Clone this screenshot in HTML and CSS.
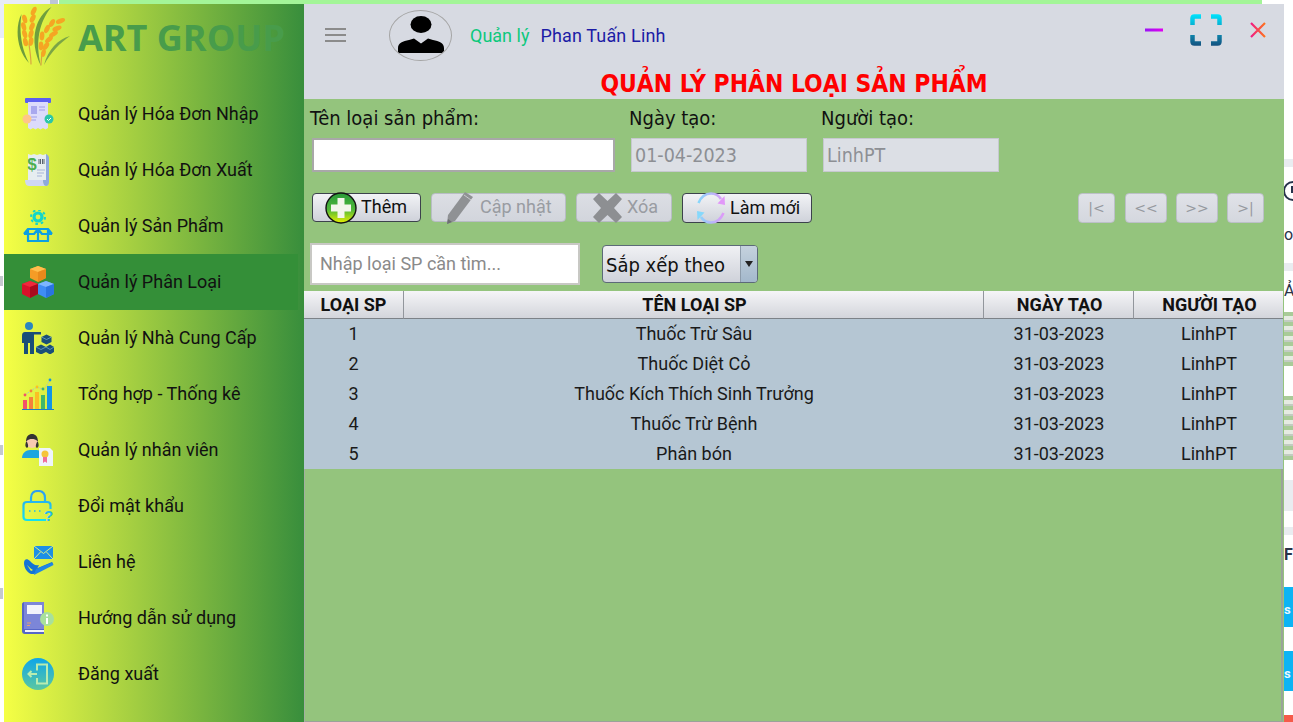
FILE: index.html
```html
<!DOCTYPE html>
<html lang="vi">
<head>
    <meta charset="UTF-8">
    <meta name="viewport" content="width=device-width, initial-scale=1.0">
    <title>Quản lý phân loại sản phẩm</title>
    <link rel="stylesheet" href="styles.css">
</head>
<body>
    <!-- desktop behind the window -->
    <div class="backdrop">
        <div class="bg-tab"></div>
        <div class="bg-tab-edge"></div>
        <div class="bg-topbar"></div>
        <div class="bg-bar bg-bar-1"></div>
        <div class="bg-clock"></div>
        <div class="bg-text bg-text-1">o</div>
        <div class="bg-bar bg-bar-2"></div>
        <div class="bg-text bg-text-2">Ản</div>
        <div class="bg-thumb bg-thumb-1"></div>
        <div class="bg-thumb bg-thumb-2"></div>
        <div class="bg-bar bg-bar-3"></div>
        <div class="bg-bar bg-bar-4"></div>
        <div class="bg-text bg-text-3">Fil</div>
        <div class="bg-blue bg-blue-1">s</div>
        <div class="bg-blue bg-blue-2">s</div>
        <div class="bg-red"></div>
        <div class="bg-left bg-left-1"></div>
        <div class="bg-left bg-left-2"></div>
        <div class="bg-left bg-left-3"></div>
    </div>

    <div class="window">
        <aside class="sidebar">
            <div class="brand">
                <svg class="brand-logo" width="58" height="62" viewBox="0 0 58 62">
                    <g fill="none" stroke-linecap="round">
                        <path d="M5.500 8C-1 20 0 44 13 57C5 42 3 24 5.500 8Z" fill="#6d9c3c"/>
                        <path d="M35.500 1C20 9 12 34 25 60C19 36 23 16 35.500 1Z" fill="#6f9f3e"/>
                        <path d="M54 30C42 33 32 44 28 59C35 46 44 37 54 30Z" fill="#7ba546"/>
                        <path d="M13 38C14 46 15 52 15 58" stroke="#d9a441" stroke-width="1.200"/>
                        <path d="M26 46C26 50 25 55 25 59" stroke="#d9a441" stroke-width="1.200"/>
                    </g>
                    <g fill="#f5a623">
                        <ellipse cx="17.700" cy="5" rx="2.400" ry="4.600" transform="rotate(25 17.700 5)"/>
                        <ellipse cx="8.700" cy="13" rx="2.400" ry="4.400" transform="rotate(-15 8.700 13)"/>
                        <ellipse cx="16.700" cy="12.500" rx="2.400" ry="4.400" transform="rotate(28 16.700 12.500)"/>
                        <ellipse cx="7.700" cy="20.500" rx="2.400" ry="4.400" transform="rotate(-15 7.700 20.500)"/>
                        <ellipse cx="16" cy="20.500" rx="2.400" ry="4.400" transform="rotate(22 16 20.500)"/>
                        <ellipse cx="8.700" cy="28" rx="2.400" ry="4.400" transform="rotate(-15 8.700 28)"/>
                        <ellipse cx="15" cy="28" rx="2.400" ry="4.400" transform="rotate(15 15 28)"/>
                        <ellipse cx="9.500" cy="36" rx="2.400" ry="4.400" transform="rotate(-12 9.500 36)"/>
                        <ellipse cx="15" cy="35.500" rx="2.400" ry="4.400" transform="rotate(8 15 35.500)"/>
                        <ellipse cx="44.500" cy="15" rx="2.400" ry="4.800" transform="rotate(70 44.500 15)"/>
                        <ellipse cx="36" cy="17" rx="2.400" ry="4.400" transform="rotate(30 36 17)"/>
                        <ellipse cx="41" cy="22.500" rx="2.400" ry="4.800" transform="rotate(70 41 22.500)"/>
                        <ellipse cx="31" cy="23" rx="2.400" ry="4.400" transform="rotate(25 31 23)"/>
                        <ellipse cx="37.500" cy="28" rx="2.400" ry="4.800" transform="rotate(60 37.500 28)"/>
                        <ellipse cx="26" cy="30" rx="2.400" ry="4.400" transform="rotate(5 26 30)"/>
                        <ellipse cx="33" cy="33.500" rx="2.400" ry="4.600" transform="rotate(50 33 33.500)"/>
                        <ellipse cx="25" cy="40" rx="2.400" ry="4.400" transform="rotate(0 25 40)"/>
                        <ellipse cx="30" cy="40" rx="2.400" ry="4.400" transform="rotate(35 30 40)"/>
                        <ellipse cx="27.500" cy="47" rx="2.200" ry="4" transform="rotate(15 27.500 47)"/>
                    </g>
                </svg>
                <span class="brand-name">ART GROUP</span>
            </div>

            <nav class="menu">
                <a class="menu-item">
                    <svg class="menu-icon" width="32" height="32" viewBox="0 0 32 32">
                        <rect x="3" y="0" width="26" height="5" rx="1" fill="#5b5ff0"/>
                        <path d="M6 4H26V30L23.500 31.500 21 30 18.500 31.500 16 30 13.500 31.500 11 30 8.500 31.500 6 30Z" fill="#dcdbfb"/>
                        <rect x="9" y="8" width="6" height="8" fill="#a9a8ee"/>
                        <path d="M17 9H23M17 12H23M9 19H15M9 22H14" stroke="#b4b3f0" stroke-width="1.300"/>
                        <circle cx="5" cy="21" r="4.500" fill="#ffc688"/>
                        <circle cx="27" cy="21" r="4.500" fill="#2cc6a8"/>
                        <path d="M25 21L26.500 22.500 29 20" fill="none" stroke="#fff" stroke-width="1"/>
                    </svg>
                    <span>Quản lý Hóa Đơn Nhập</span>
                </a>
                <a class="menu-item">
                    <svg class="menu-icon" width="32" height="32" viewBox="0 0 32 32">
                        <path d="M6 0L9 1 12 0 15 1 18 0 21 1 24 0V26H6Z" fill="#e6edf0"/>
                        <path d="M3 26H21C21 29 23 32 27 32H7C4 32 3 29 3 26Z" fill="#cfd7f3"/>
                        <path d="M24 0C26 1 27 2 27 4V28C27 30 26 32 24 32C22 32 21 29 21 26H24Z" fill="#8ea9dc"/>
                        <text x="10" y="16" class="icon-dollar">$</text>
                        <path d="M17 5V10M18.500 5V10M20.500 5V10M22 5V10" stroke="#5a6470" stroke-width="1"/>
                        <path d="M15 16H23M15 19H22M15 22H20" stroke="#a8b5d8" stroke-width="1"/>
                    </svg>
                    <span>Quản lý Hóa Đơn Xuất</span>
                </a>
                <a class="menu-item">
                    <svg class="menu-icon" width="32" height="32" viewBox="0 0 32 32">
                        <circle cx="16" cy="7" r="4" fill="none" stroke="#12d6c8" stroke-width="3.200"/>
                        <circle cx="16" cy="7" r="7" fill="none" stroke="#12d6c8" stroke-width="2" stroke-dasharray="2.600 2.900"/>
                        <path d="M6 19H26V31H6ZM16 19V31M2 24L6 19M30 24L26 19M2 24H12L16 19L20 24H30" fill="none" stroke="#0d9fe3" stroke-width="2.200" stroke-linejoin="round"/>
                    </svg>
                    <span>Quản lý Sản Phẩm</span>
                </a>
                <a class="menu-item menu-item-active">
                    <svg class="menu-icon" width="32" height="32" viewBox="0 0 32 32">
                        <path d="M16 0L24 3V12L16 16 8 12V3Z" fill="#f59c26"/>
                        <path d="M8 3L16 6 24 3 16 0Z" fill="#ffbe4d"/>
                        <path d="M16 6V16L24 12V3Z" fill="#e8891b"/>
                        <path d="M8 15L16 18V28L8 32 0 28V18Z" fill="#d8122a"/>
                        <path d="M0 18L8 21 16 18 8 15Z" fill="#f0283c"/>
                        <path d="M8 21V32L16 28V18Z" fill="#a80b1e"/>
                        <path d="M24 15L32 18V28L24 32 16 28V18Z" fill="#3f8df5"/>
                        <path d="M16 18L24 21 32 18 24 15Z" fill="#7db6ff"/>
                        <path d="M24 21V32L32 28V18Z" fill="#2a74e0"/>
                    </svg>
                    <span>Quản lý Phân Loại</span>
                </a>
                <a class="menu-item">
                    <svg class="menu-icon" width="32" height="32" viewBox="0 0 32 32">
                        <circle cx="7" cy="4" r="4" fill="#2b86c0"/>
                        <path d="M3 10H19V12.500H12V32H8V21H6V32H2V21H0V14C0 11 1 10 3 10Z" fill="#1a4f78"/>
                        <path d="M24.500 12.500L29.500 15V20L24.500 22.500 19.500 20V15Z" fill="#1a4f78"/>
                        <path d="M19 22.500L24 25V30L19 32.500 14 30V25Z" fill="#1a4f78"/>
                        <path d="M28 22.500L32 25V30L28 32.500 24 30V25Z" fill="#1a4f78"/>
                        <path d="M19.500 15L24.500 17.500 29.500 15M14 25L19 27.500 24 25M24 25L28 27.500 32 25" fill="none" stroke="#6fa6c8" stroke-width=".8"/>
                    </svg>
                    <span>Quản lý Nhà Cung Cấp</span>
                </a>
                <a class="menu-item">
                    <svg class="menu-icon" width="32" height="32" viewBox="0 0 32 32">
                        <path d="M3 17L10 12 15 9 22 12 28 2" fill="none" stroke="#a9c9b8" stroke-width="1" stroke-dasharray="2 1"/>
                        <rect x="1" y="22" width="4" height="9" fill="#f3526a"/>
                        <rect x="7" y="19" width="4" height="12" fill="#f5813c"/>
                        <rect x="13" y="14" width="4" height="17" fill="#fbbf24"/>
                        <rect x="19" y="17" width="4" height="14" fill="#3fb86b"/>
                        <rect x="25" y="8" width="5" height="23" fill="#1295e8"/>
                        <rect x="0" y="31" width="32" height="1" fill="#1d7fc4"/>
                        <circle cx="3" cy="17" r="1.400" fill="#f3526a"/>
                        <circle cx="9" cy="13" r="1.400" fill="#f5813c"/>
                        <circle cx="15" cy="9" r="1.400" fill="#fbbf24"/>
                        <circle cx="21" cy="11" r="1.400" fill="#3fb86b"/>
                        <circle cx="28" cy="2" r="1.400" fill="#1295e8"/>
                    </svg>
                    <span>Tổng hợp - Thống kê</span>
                </a>
                <a class="menu-item">
                    <svg class="menu-icon" width="32" height="32" viewBox="0 0 32 32">
                        <path d="M0 24C0 19 4 16 8 16H15C18 16 20 19 20 24H0Z" fill="#1da6e0"/>
                        <circle cx="10" cy="8" r="6" fill="#f7c9b0"/>
                        <path d="M4 8C4 2 7 0 10 0S16 2 16 8C14 5 12 5 10 5S6 5 4 8Z" fill="#333"/>
                        <path d="M4 8C3 11 3 13 5 14C7 13 6 10 5 8ZM16 8C17 11 17 13 15 14C13 13 14 10 15 8Z" fill="#333"/>
                        <path d="M17 14H28L31 17V32H17Z" fill="#eef4fb"/>
                        <circle cx="23" cy="20" r="3.500" fill="#f5c53a"/>
                        <path d="M21 23V29L23 27.500 25 29V23Z" fill="#f06f9b"/>
                    </svg>
                    <span>Quản lý nhân viên</span>
                </a>
                <a class="menu-item">
                    <svg class="menu-icon" width="32" height="32" viewBox="0 0 32 32">
                        <defs>
                            <linearGradient id="lockGrad" x1="0" y1="0" x2="0" y2="1">
                                <stop offset="0" stop-color="#2f9df0"/>
                                <stop offset="1" stop-color="#14e0f0"/>
                            </linearGradient>
                        </defs>
                        <path d="M9 12V8C9 3 12 1 16 1S23 3 23 8V12M24 30H5C2.500 30 1.500 29 1.500 27V15C1.500 13 2.500 12 5 12H25C27 12 28.500 13 28.500 15V19" fill="none" stroke="url(#lockGrad)" stroke-width="2.200"/>
                        <path d="M7 21H8.500M12 21H13.500M17 21H18.500" stroke="#22b8f0" stroke-width="1.600"/>
                        <text x="22" y="31" class="icon-question">?</text>
                    </svg>
                    <span>Đổi mật khẩu</span>
                </a>
                <a class="menu-item">
                    <svg class="menu-icon" width="32" height="32" viewBox="0 0 32 32">
                        <rect x="12" y="0" width="19" height="13" fill="#1d8fe6"/>
                        <path d="M12 0L21.500 7.500 31 0M12 13L18.500 6M31 13L24.500 6" fill="none" stroke="#d6ee8a" stroke-width="1"/>
                        <path d="M2 17C2 13 5 12 8 15C11 18 13 20 17 19L15 23 11 24C9 23 6 20 5 19L9 25 11 24 30 16 31 18 12 28 9 28C5 26 2 22 2 17Z" fill="#1474d4"/>
                        <path d="M14 23L24 19 30.500 16.500 31.500 19 12 29Z" fill="#1f86e4"/>
                    </svg>
                    <span>Liên hệ</span>
                </a>
                <a class="menu-item">
                    <svg class="menu-icon" width="32" height="32" viewBox="0 0 32 32">
                        <path d="M2 0H22V27H2Z" fill="#7c86d8"/>
                        <rect x="5" y="3" width="15" height="9" fill="#f2f3fb"/>
                        <path d="M5 21H9M5 23.500H8" stroke="#e8a070" stroke-width="1"/>
                        <path d="M0 2C0 1 1 0 2 0V27H22V32H3C1 32 0 31 0 29Z" fill="#5666c8"/>
                        <rect x="3" y="28" width="19" height="2" fill="#f2f3fb"/>
                        <circle cx="25" cy="17" r="7" fill="#a8e09c"/>
                        <rect x="24" y="16" width="2" height="6" fill="#fff"/>
                        <rect x="24" y="12.500" width="2" height="2" fill="#fff"/>
                    </svg>
                    <span>Hướng dẫn sử dụng</span>
                </a>
                <a class="menu-item">
                    <svg class="menu-icon" width="32" height="32" viewBox="0 0 32 32">
                        <defs>
                            <linearGradient id="exitGrad" x1="0" y1="0" x2="0" y2="1">
                                <stop offset="0" stop-color="#0ea5e9"/>
                                <stop offset="1" stop-color="#5cc8a0"/>
                            </linearGradient>
                        </defs>
                        <circle cx="16" cy="16" r="16" fill="url(#exitGrad)"/>
                        <path d="M15 12.500V6.500H25V25.500H15V20" fill="none" stroke="#b8ecb0" stroke-width="2"/>
                        <path d="M15 16H6.500M9.500 13L6.500 16 9.500 19" fill="none" stroke="#b8ecb0" stroke-width="2"/>
                    </svg>
                    <span>Đăng xuất</span>
                </a>
            </nav>
        </aside>

        <main class="content">
            <header class="topbar">
                <div class="topbar-row">
                    <div class="hamburger"><i></i><i></i><i></i></div>
                    <div class="avatar">
                        <svg width="48" height="38" viewBox="0 0 48 38">
                            <ellipse cx="24" cy="8.500" rx="10.500" ry="8.500"/>
                            <path d="M1 37V32C1 27 6 25 12 24L17 22.500 24 27.500 31 22.500 36 24C42 25 47 27 47 32V37Z"/>
                        </svg>
                    </div>
                    <span class="role">Quản lý</span>
                    <span class="username">Phan Tuấn Linh</span>
                    <div class="win-controls">
                        <svg width="18" height="4" viewBox="0 0 18 4">
                            <defs>
                                <linearGradient id="minGrad">
                                    <stop offset="0" stop-color="#9a14f5"/>
                                    <stop offset="1" stop-color="#e000f0"/>
                                </linearGradient>
                            </defs>
                            <rect width="18" height="3" y=".5" fill="url(#minGrad)"/>
                        </svg>
                        <svg width="32" height="32" viewBox="0 0 32 32">
                            <defs>
                                <linearGradient id="fullGrad" gradientUnits="userSpaceOnUse" x1="0" y1="0" x2="0" y2="32">
                                    <stop offset="0" stop-color="#00e5ff"/>
                                    <stop offset="1" stop-color="#14507e"/>
                                </linearGradient>
                            </defs>
                            <path d="M11 2.500H4.500Q2.500 2.500 2.500 4.500V11M21 2.500H27.500Q29.500 2.500 29.500 4.500V11M11 29.500H4.500Q2.500 29.500 2.500 27.500V21M21 29.500H27.500Q29.500 29.500 29.500 27.500V21" fill="none" stroke="url(#fullGrad)" stroke-width="4.500"/>
                        </svg>
                        <svg class="win-close" width="16" height="16" viewBox="0 0 16 16">
                            <defs>
                                <linearGradient id="closeGrad" gradientUnits="userSpaceOnUse" x1="0" y1="0" x2="16" y2="0">
                                    <stop offset="0" stop-color="#f0148c"/>
                                    <stop offset="1" stop-color="#ff7a14"/>
                                </linearGradient>
                            </defs>
                            <path d="M1 1L15 15M15 1L1 15" stroke="url(#closeGrad)" stroke-width="2.200" fill="none"/>
                        </svg>
                    </div>
                </div>
                <h1 class="page-title">QUẢN LÝ PHÂN LOẠI SẢN PHẨM</h1>
            </header>

            <section class="panel">
                <div class="fields">
                    <div class="field field-name">
                        <label>Tên loại sản phẩm:</label>
                        <input type="text" class="input">
                    </div>
                    <div class="field field-meta">
                        <label>Ngày tạo:</label>
                        <input type="text" class="input" value="01-04-2023" disabled>
                    </div>
                    <div class="field field-meta">
                        <label>Người tạo:</label>
                        <input type="text" class="input" value="LinhPT" disabled>
                    </div>
                </div>

                <div class="actions">
                    <button class="btn btn-add">
                        <svg width="32" height="32" viewBox="0 0 32 32">
                            <defs>
                                <linearGradient id="addGrad" x1="0" y1="0" x2="0" y2="1">
                                    <stop offset="0" stop-color="#2a9a3a"/>
                                    <stop offset=".55" stop-color="#4fb83a"/>
                                    <stop offset="1" stop-color="#e8f000"/>
                                </linearGradient>
                            </defs>
                            <circle cx="16" cy="16" r="15" fill="url(#addGrad)" stroke="#111" stroke-width="1.400"/>
                            <path d="M12.500 6H19.500V12.500H26V19.500H19.500V26H12.500V19.500H6V12.500H12.500Z" fill="#f4f6ec"/>
                        </svg>
                        <span>Thêm</span>
                    </button>
                    <button class="btn btn-edit" disabled>
                        <svg width="26" height="32" viewBox="0 0 26 32">
                            <path d="M18 0L26 5 8 29 0 32 1 23Z" fill="#8f9194"/>
                            <path d="M17 3L24 8" stroke="#c8cacd" stroke-width="1"/>
                            <path d="M1 27L0 32 5 30Z" fill="#6d6f72"/>
                        </svg>
                        <span>Cập nhật</span>
                    </button>
                    <button class="btn btn-del" disabled>
                        <svg width="29" height="30" viewBox="0 0 29 30">
                            <path d="M6 0L14.500 8 23 0 29 6 21 15 29 24 23 30 14.500 22 6 30 0 24 8 15 0 6Z" fill="#8d8f92"/>
                        </svg>
                        <span>Xóa</span>
                    </button>
                    <button class="btn btn-refresh">
                        <svg width="32" height="32" viewBox="0 0 32 32">
                            <defs>
                                <linearGradient id="refreshGrad" gradientUnits="userSpaceOnUse" x1="3" y1="0" x2="29" y2="0">
                                    <stop offset="0" stop-color="#86d8fb"/>
                                    <stop offset="1" stop-color="#e198f8"/>
                                </linearGradient>
                            </defs>
                            <path d="M3.500 11C6 5 11 1.500 16 1.500C20 1.500 23.500 3 26 7" fill="none" stroke="url(#refreshGrad)" stroke-width="2.600"/>
                            <path d="M29.500 4L30 13 22.500 11.500Z" fill="#e198f8"/>
                            <path d="M28.500 21C26 27 21 30.500 16 30.500C12 30.500 8.500 29 6 25" fill="none" stroke="url(#refreshGrad)" stroke-width="2.600"/>
                            <path d="M2.500 28L2 19 9.500 20.500Z" fill="#86d8fb"/>
                        </svg>
                        <span>Làm mới</span>
                    </button>
                    <div class="pager">
                        <button class="page-btn page-btn-sm" disabled>|&lt;</button>
                        <button class="page-btn" disabled>&lt;&lt;</button>
                        <button class="page-btn" disabled>&gt;&gt;</button>
                        <button class="page-btn page-btn-sm" disabled>&gt;|</button>
                    </div>
                </div>

                <div class="filters">
                    <input type="text" class="search" placeholder="Nhập loại SP cần tìm...">
                    <div class="sort">
                        <span class="sort-label">Sắp xếp theo</span>
                        <span class="sort-arrow"></span>
                    </div>
                </div>
            </section>

            <div class="table-pane">
                <table class="grid">
                    <thead>
                        <tr>
                            <th class="col-id">LOẠI SP</th>
                            <th>TÊN LOẠI SP</th>
                            <th class="col-date">NGÀY TẠO</th>
                            <th class="col-user">NGƯỜI TẠO</th>
                        </tr>
                    </thead>
                    <tbody>
                        <tr><td>1</td><td>Thuốc Trừ Sâu</td><td>31-03-2023</td><td>LinhPT</td></tr>
                        <tr><td>2</td><td>Thuốc Diệt Cỏ</td><td>31-03-2023</td><td>LinhPT</td></tr>
                        <tr><td>3</td><td>Thuốc Kích Thích Sinh Trưởng</td><td>31-03-2023</td><td>LinhPT</td></tr>
                        <tr><td>4</td><td>Thuốc Trừ Bệnh</td><td>31-03-2023</td><td>LinhPT</td></tr>
                        <tr><td>5</td><td>Phân bón</td><td>31-03-2023</td><td>LinhPT</td></tr>
                    </tbody>
                </table>
            </div>
        </main>
    </div>
</body>
</html>
```

FILE: styles.css
```css
body {
    margin: 0;
    height: 722px;
    overflow: hidden;
    background: #fff;
    font-family: Roboto, sans-serif;
    color: #111;
}

/* desktop behind the window */
.backdrop div {
    position: absolute;
}
.bg-tab {
    left: 0;
    top: 0;
    width: 50px;
    height: 38px;
    background: #e8ecf8;
}
.bg-tab-edge {
    left: 50px;
    top: 0;
    width: 8px;
    height: 4px;
    background: #bcc6d6;
}
.bg-topbar {
    left: 59px;
    top: 0;
    width: 1203px;
    height: 4px;
    background: #a3f598;
}
.bg-bar {
    left: 1284px;
    width: 9px;
    background: #e9ecf0;
}
.bg-bar-1 { top: 159px; height: 8px; }
.bg-bar-2 { top: 263px; height: 8px; }
.bg-bar-3 { top: 480px; height: 31px; }
.bg-bar-4 { top: 527px; height: 8px; }
.bg-clock {
    left: 1283px;
    top: 181px;
    width: 16px;
    height: 16px;
    border: 2px solid #26324a;
    border-radius: 50%;
}
.bg-clock::after {
    content: "";
    position: absolute;
    left: 6px;
    top: 3px;
    width: 2px;
    height: 7px;
    background: #26324a;
}
.bg-text {
    left: 1284px;
    font-size: 16px;
    line-height: 18px;
    color: #2a3348;
}
.bg-text-1 { top: 226px; }
.bg-text-2 { top: 282px; }
.bg-text-3 { top: 546px; font-weight: bold; }
.bg-thumb {
    left: 1284px;
    width: 9px;
    background: repeating-linear-gradient(#a9cb98 0, #a9cb98 4px, #e6ebe2 4px, #e6ebe2 8px, #c2cbc2 8px, #c2cbc2 10px);
}
.bg-thumb-1 { top: 312px; height: 54px; }
.bg-thumb-2 { top: 396px; height: 64px; }
.bg-blue {
    left: 1284px;
    width: 9px;
    height: 40px;
    background: #0cb4f4;
    color: #e8f8ff;
    font-size: 13px;
    font-weight: bold;
    line-height: 46px;
    overflow: hidden;
}
.bg-blue-1 { top: 587px; }
.bg-blue-2 { top: 651px; }
.bg-red {
    left: 1284px;
    top: 715px;
    width: 9px;
    height: 7px;
    background: #f55a4a;
}
.bg-left {
    left: 0;
    width: 3px;
    background: #c4c8ce;
}
.bg-left-1 { top: 276px; height: 10px; }
.bg-left-2 { top: 445px; height: 10px; }
.bg-left-3 { top: 588px; height: 11px; }

/* app window */
.window {
    position: absolute;
    left: 4px;
    top: 4px;
    width: 1280px;
    height: 718px;
    display: flex;
}

.sidebar {
    width: 300px;
    flex-shrink: 0;
    background: linear-gradient(to right, #f5ff45, #388e3c);
}
.brand {
    height: 82px;
    display: flex;
    align-items: flex-start;
}
.brand-logo {
    margin: 2px 0 0 12px;
}
.brand-name {
    margin: 12px 0 0 4px;
    font-family: "Open Sans", sans-serif;
    font-size: 36px;
    font-weight: 700;
    line-height: 44px;
    color: #489c4b;
    white-space: nowrap;
}
.menu-item {
    box-sizing: border-box;
    height: 56px;
    display: flex;
    align-items: center;
    gap: 24px;
    padding-left: 18px;
    font-size: 18px;
    color: #111;
}
.menu-item span {
    margin-bottom: 2px;
}
.menu-item-active {
    width: 294px;
    background: #348f38;
}
.icon-dollar {
    font-family: "Liberation Sans", sans-serif;
    font-size: 17px;
    font-weight: bold;
    text-anchor: middle;
    fill: #4caf50;
}
.icon-question {
    font-family: "Liberation Sans", sans-serif;
    font-size: 15px;
    font-weight: bold;
    fill: #22b8f0;
}

.content {
    flex: 1;
    min-width: 0;
    display: flex;
    flex-direction: column;
    background: #94c47d;
}

.topbar {
    height: 95px;
    background: #d7dae2;
}
.topbar-row {
    height: 62px;
    display: flex;
    align-items: center;
}
.hamburger {
    margin-left: 21px;
    width: 21px;
    display: flex;
    flex-direction: column;
    gap: 4px;
}
.hamburger i {
    display: block;
    height: 2px;
    background: #8b8b8b;
}
.avatar {
    margin: 6px 0 0 43px;
    width: 61px;
    height: 49px;
    align-self: flex-start;
    border: 1px solid #a5a5a5;
    border-radius: 50%;
    display: flex;
    justify-content: center;
    align-items: flex-start;
    overflow: hidden;
}
.avatar svg {
    margin-top: 5px;
    flex-shrink: 0;
}
.role {
    margin-left: 18px;
    font-size: 18px;
    color: #0cc87c;
}
.username {
    margin-left: 11px;
    font-size: 18px;
    letter-spacing: .15px;
    color: #1c1ca6;
}
.win-controls {
    margin-left: auto;
    margin-right: 18px;
    align-self: flex-start;
    margin-top: 10px;
    height: 32px;
    display: flex;
    align-items: center;
    gap: 27px;
}
.win-close {
    margin-left: 1px;
}
.page-title {
    margin: 0;
    height: 33px;
    padding-top: 1px;
    box-sizing: border-box;
    line-height: 33px;
    text-align: center;
    font-family: "DejaVu Sans Condensed", "DejaVu Sans", sans-serif;
    font-size: 24.4px;
    font-weight: bold;
    color: #ff0000;
}

.panel {
    padding: 7px 20px 6px 6px;
}
.fields {
    display: flex;
    gap: 14px;
}
.field label {
    display: block;
    height: 24px;
    margin-bottom: 8px;
    font-family: "DejaVu Sans Condensed", "DejaVu Sans", sans-serif;
    font-size: 20px;
    line-height: 24px;
}
.field-name .input {
    width: 303px;
}
.field-meta .input {
    width: 176px;
}
.input {
    display: block;
    box-sizing: border-box;
    height: 34px;
    margin-left: 2px;
    padding: 0 3px;
    border: 2px solid #a8a8a8;
    background: #fff;
    font-family: "DejaVu Sans Condensed", "DejaVu Sans", sans-serif;
    font-size: 19.5px;
}
.input:disabled {
    border: 1px solid #c6c9cf;
    background: #dcdfe5;
    color: #8d8f94;
}

.actions {
    display: flex;
    align-items: flex-start;
    margin-top: 21px;
    margin-left: 2px;
}
.btn {
    box-sizing: border-box;
    height: 29px;
    display: flex;
    align-items: center;
    padding: 0;
    border: 1px solid #3c424c;
    border-radius: 4px;
    background: linear-gradient(#f2f3f6, #cfd2da);
    font-family: Roboto, sans-serif;
    font-size: 18px;
    color: #111;
}
.btn span {
    margin-bottom: 2px;
}
.btn svg {
    flex-shrink: 0;
    margin: -2px 0;
}
.btn:disabled {
    border-color: #b8bdc5;
    background: linear-gradient(#dcdee4, #d2d5dc);
    color: #999ca2;
}
.btn-add {
    width: 109px;
    padding-left: 12px;
    gap: 4px;
}
.btn-edit {
    width: 135px;
    margin-left: 10px;
    padding-left: 15px;
    gap: 7px;
}
.btn-del {
    width: 96px;
    margin-left: 10px;
    padding-left: 16px;
    gap: 5px;
}
.btn-refresh {
    width: 130px;
    height: 30px;
    margin-left: 10px;
    padding-left: 12px;
    gap: 3px;
}
.pager {
    margin-left: auto;
    display: flex;
    gap: 9px;
}
.page-btn {
    box-sizing: border-box;
    width: 42px;
    height: 30px;
    padding: 0;
    border: 1px solid #bcc0c8;
    border-radius: 4px;
    background: linear-gradient(#e0e2e8, #d4d7de);
    font-family: "DejaVu Sans", sans-serif;
    font-size: 14px;
    color: #96999f;
}
.page-btn-sm {
    width: 37px;
}
.pager .page-btn:nth-child(1) {
    margin-right: 1px;
}

.filters {
    display: flex;
    align-items: center;
    margin-top: 20px;
}
.search {
    box-sizing: border-box;
    width: 270px;
    height: 42px;
    padding: 0 8px 2px;
    border: 2px solid #c8c8c4;
    background: #fff;
    font-family: Roboto, sans-serif;
    font-size: 18px;
}
.search::placeholder {
    color: #8a8a8a;
}
.sort {
    box-sizing: border-box;
    width: 156px;
    height: 38px;
    margin-left: 22px;
    display: flex;
    justify-content: space-between;
    border: 1px solid #5c6a78;
    border-radius: 4px;
    background: linear-gradient(#f0f1f4, #cfd2da);
    overflow: hidden;
}
.sort-label {
    margin-left: 3px;
    font-family: "DejaVu Sans Condensed", "DejaVu Sans", sans-serif;
    font-size: 20px;
    line-height: 38px;
}
.sort-arrow {
    width: 16px;
    background: linear-gradient(#c5d2de, #a3b8cc);
    border-left: 1px solid #8d9cab;
    position: relative;
}
.sort-arrow::after {
    content: "";
    position: absolute;
    left: 4px;
    top: 15px;
    border-left: 4px solid transparent;
    border-right: 4px solid transparent;
    border-top: 6px solid #222;
}

.table-pane {
    flex: 1;
    margin-right: 1px;
    box-shadow: inset 1px 0 #a3afa0, inset -2px 0 #9aa39a, inset 0 -1px #9aa39a;
}
.grid {
    width: 100%;
    table-layout: fixed;
    border-collapse: separate;
    border-spacing: 0;
    font-size: 18px;
}
.grid th {
    box-sizing: border-box;
    height: 28px;
    padding: 0 0 0 2px;
    border-bottom: 1px solid #7d8288;
    border-left: 1px solid #92969c;
    background: linear-gradient(#f5f5f7, #d3d5db);
    font-weight: bold;
    color: #111;
}
.grid th:first-child {
    border-left: none;
    padding-left: 0;
}
.grid td {
    box-sizing: border-box;
    height: 30px;
    padding: 0 0 2px 2px;
    background: #b5c6d3;
    text-align: center;
    color: #1a1a1a;
}
.grid td:first-child {
    padding-left: 0;
}
.col-id {
    width: 99px;
}
.col-date,
.col-user {
    width: 150px;
}
```
